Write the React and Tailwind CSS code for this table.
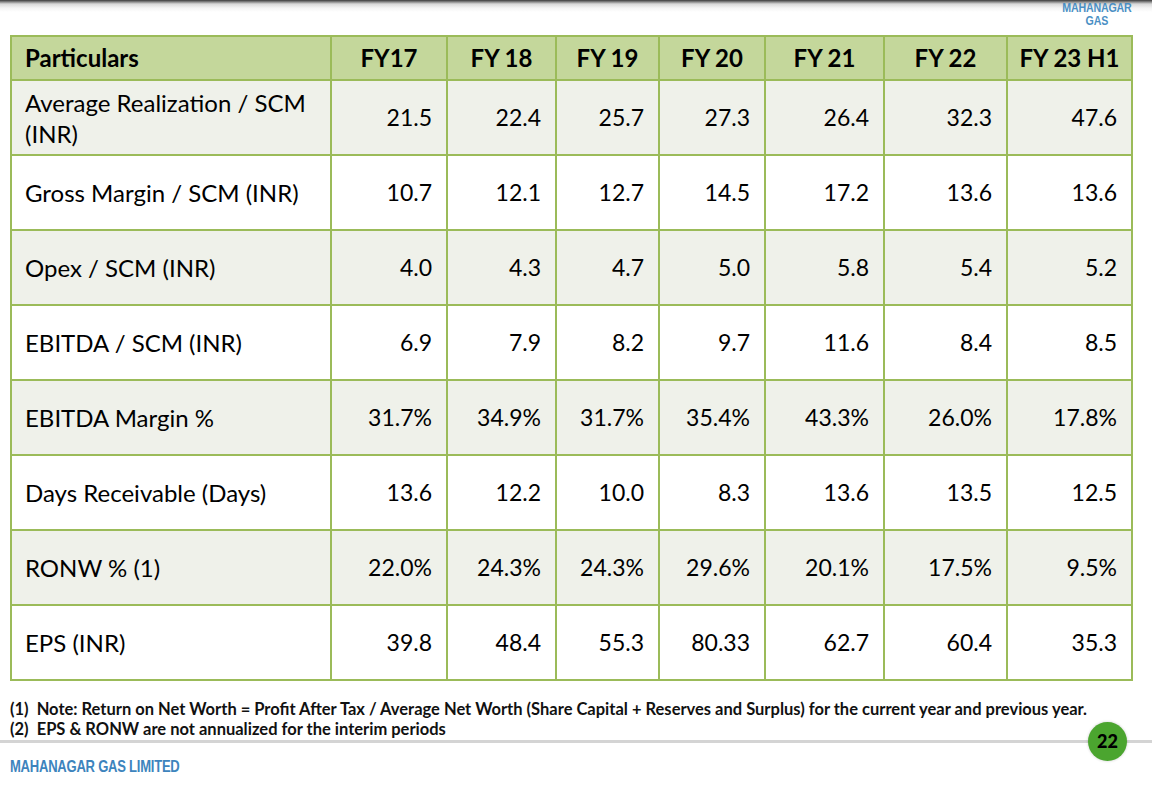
import React from "react";

const rows = [
  { label: "Average Realization / SCM (INR)", values: ["21.5", "22.4", "25.7", "27.3", "26.4", "32.3", "47.6"] },
  { label: "Gross Margin / SCM (INR)", values: ["10.7", "12.1", "12.7", "14.5", "17.2", "13.6", "13.6"] },
  { label: "Opex / SCM (INR)", values: ["4.0", "4.3", "4.7", "5.0", "5.8", "5.4", "5.2"] },
  { label: "EBITDA / SCM (INR)", values: ["6.9", "7.9", "8.2", "9.7", "11.6", "8.4", "8.5"] },
  { label: "EBITDA Margin %", values: ["31.7%", "34.9%", "31.7%", "35.4%", "43.3%", "26.0%", "17.8%"] },
  { label: "Days Receivable (Days)", values: ["13.6", "12.2", "10.0", "8.3", "13.6", "13.5", "12.5"] },
  { label: "RONW % (1)", values: ["22.0%", "24.3%", "24.3%", "29.6%", "20.1%", "17.5%", "9.5%"] },
  { label: "EPS (INR)", values: ["39.8", "48.4", "55.3", "80.33", "62.7", "60.4", "35.3"] },
];

const years = ["FY17", "FY 18", "FY 19", "FY 20", "FY 21", "FY 22", "FY 23 H1"];
const widths = ["w-[320px]", "w-[116px]", "w-[109px]", "w-[103px]", "w-[106px]", "w-[119px]", "w-[123px]", "w-[125px]"];

export default function App() {
  return (
    <div className="relative h-[794px] w-[1152px] overflow-hidden bg-white font-['Lato',sans-serif] text-black">
      <div className="flex h-[35px] justify-end bg-[linear-gradient(180deg,#3a3a3a_0px,#8a8a8a_2px,#d8d8d8_4px,#f4f4f4_8px,#ffffff_12px)] pr-[20px] pt-[2px]">
        <div className="flex origin-right scale-x-[0.85] flex-col items-center font-['Liberation_Sans',sans-serif] text-[12.5px] font-bold leading-[12.5px] tracking-[-0.2px] text-[#4a8fc4]">
          <span>MAHANAGAR</span>
          <span>GAS</span>
        </div>
      </div>

      <table className="ml-[10px] table-fixed border-collapse">
        <colgroup>
          {widths.map((w, i) => (
            <col key={i} className={w} />
          ))}
        </colgroup>
        <thead>
          <tr className="h-[44px] bg-[#c4d79b]">
            <th className="border-2 border-[#9bbb59] pl-[13px] text-left text-[24px] font-bold">Particulars</th>
            {years.map((y) => (
              <th key={y} className="border-2 border-[#9bbb59] text-center text-[24px] font-bold">
                {y}
              </th>
            ))}
          </tr>
        </thead>
        <tbody>
          {rows.map((r, i) => (
            <tr key={r.label} className={`h-[75px] ${i % 2 === 0 ? "bg-[#eff1ea]" : "bg-white"}`}>
              <td className="border-2 border-[#9bbb59] pl-[13px] pr-[6px] text-[24px] leading-[31px]">{r.label}</td>
              {r.values.map((v, j) => (
                <td key={j} className="border-2 border-[#9bbb59] pr-[14px] text-right text-[23px]">
                  {v}
                </td>
              ))}
            </tr>
          ))}
        </tbody>
      </table>

      <div className="ml-[10px] mt-[18px] text-[16.5px] font-bold leading-[20px] text-[#111]">
        <p className="flex gap-[8px]">
          <span>(1)</span>
          <span>Note: Return on Net Worth = Profit After Tax / Average Net Worth (Share Capital + Reserves and Surplus) for the current year and previous year.</span>
        </p>
        <p className="flex gap-[8px]">
          <span>(2)</span>
          <span>EPS &amp; RONW are not annualized for the interim periods</span>
        </p>
      </div>

      <div className="relative mt-[1px] h-[3px] w-full bg-[#d4d4d4]">
        <div className="absolute right-[25px] top-[-18px] flex h-[39px] w-[39px] items-center justify-center rounded-full bg-[#4ba52f] text-[18px] font-black text-black shadow-[0_0_3px_rgba(0,0,0,0.2)]">
          22
        </div>
      </div>

      <div className="ml-[10px] mt-[13px] origin-left scale-x-[0.79] font-['Liberation_Sans',sans-serif] text-[16.5px] font-bold leading-[20px] tracking-[-0.3px] text-[#3d84bd]">
        MAHANAGAR GAS LIMITED
      </div>
    </div>
  );
}
